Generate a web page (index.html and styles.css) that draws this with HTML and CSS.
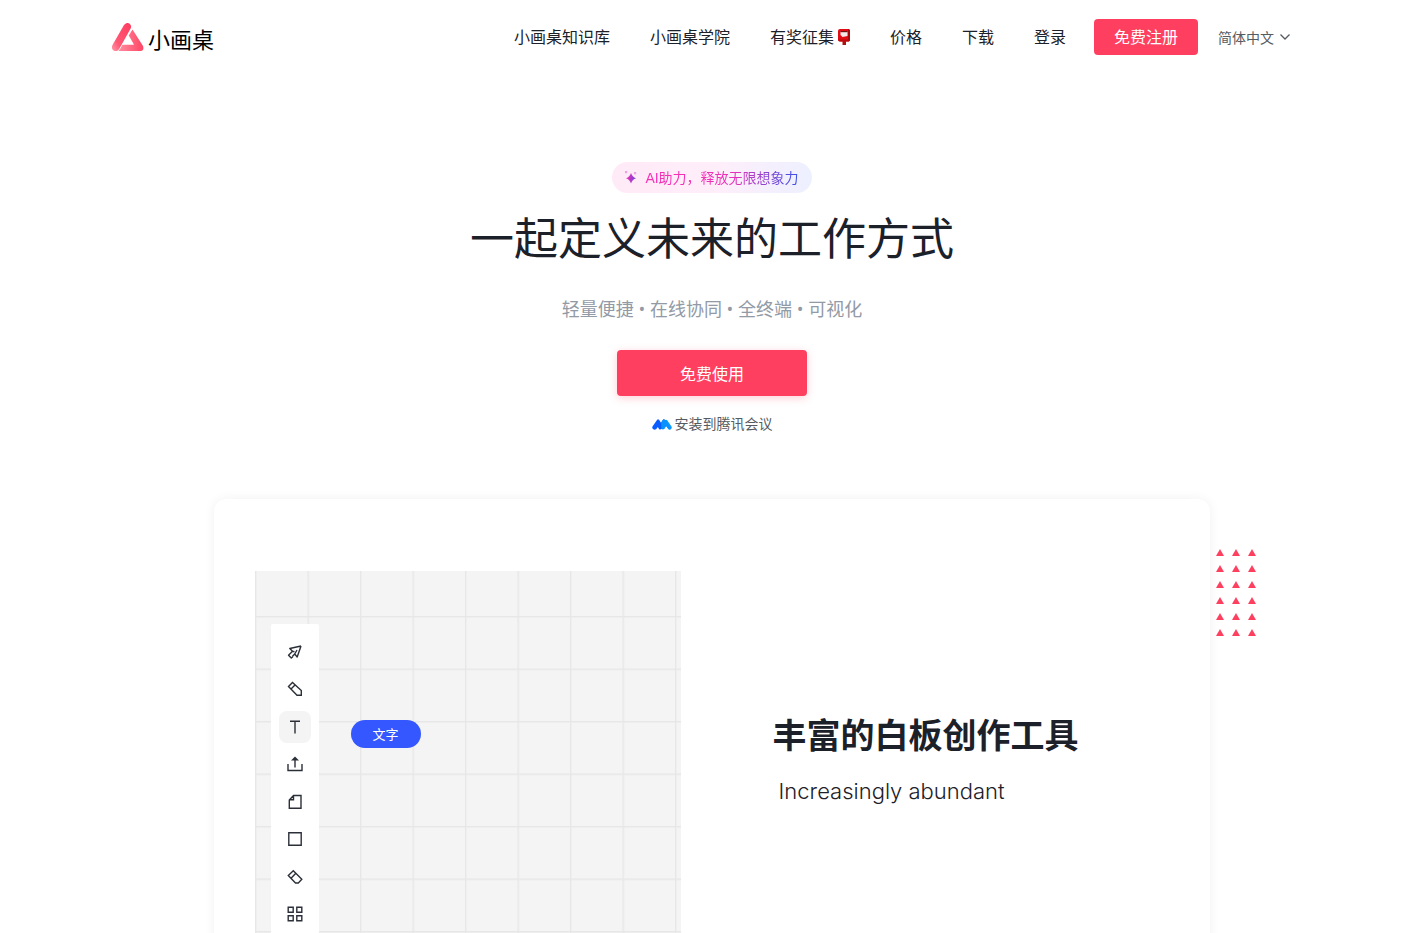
FILE: index.html
```
<!DOCTYPE html>
<html lang="zh-CN">
<head>
    <meta charset="UTF-8">
    <meta name="viewport" content="width=device-width, initial-scale=1.0">
    <title>小画桌</title>
    <link rel="stylesheet" href="styles.css">
</head>
<body>
    <div class="page">
        <!-- Header -->
        <header class="header">
            <a class="logo" href="#">
                <svg width="32" height="28" viewBox="0 0 32 28">
                    <defs>
                        <linearGradient id="logoSide" x1="1" y1="0" x2="0" y2="1">
                            <stop offset="0" stop-color="#ff3b5f" />
                            <stop offset=".7" stop-color="#ff5975" />
                            <stop offset="1" stop-color="#ff9bab" />
                        </linearGradient>
                        <linearGradient id="logoBase" x1="0" y1="0" x2="1" y2="0">
                            <stop offset="0" stop-color="#ff8d9f" />
                            <stop offset="1" stop-color="#ff4565" />
                        </linearGradient>
                    </defs>
                    <path d="M20.500 6.500L31 23q1.500 4.500-2.500 5H6.500l3.800-6.200H22L16.800 12.500z" fill="url(#logoBase)" />
                    <path d="M15.300 3.800L3.800 24.200" fill="none" stroke="white" stroke-width="9" />
                    <path d="M12 2Q15.500-2 18.500 1.800q1.200 2 0 4L7.500 25.500Q5 29.500 1.500 27.500-1.200 25.500.5 22z" fill="url(#logoSide)" />
                </svg>
                <span class="logo-text">小画桌</span>
            </a>
            <nav class="nav">
                <a href="#">小画桌知识库</a>
                <a href="#">小画桌学院</a>
                <a class="nav-post" href="#">有奖征集
                    <svg width="20" height="18" viewBox="0 0 20 18">
                        <path d="M8.500 12h3.500v5H8.500z" fill="#a81416" />
                        <rect x="4" y="1" width="12" height="12.500" rx="2" fill="#e30b13" />
                        <path d="M14 1q2 0 2 2v8.500q0 2-2 2z" fill="#a9080d" />
                        <path d="M4 11.500h12q0 2-2 2H6q-2 0-2-2z" fill="#b80c10" />
                        <path d="M6.500 3.500h7v4.500l-5 1-2-2z" fill="#f7e9e9" />
                        <path d="M6.500 3h7v1.200h-7z" fill="#6b1517" />
                    </svg>
                </a>
                <a href="#">价格</a>
                <a href="#">下载</a>
                <a href="#">登录</a>
            </nav>
            <button class="button button-small" type="button">免费注册</button>
            <button class="language" type="button">
                简体中文
                <svg width="10" height="6" viewBox="0 0 10 6">
                    <path d="M.5.5L5 5 9.500.5" fill="none" stroke="#555b61" stroke-width="1.300" />
                </svg>
            </button>
        </header>

        <!-- Hero -->
        <main class="hero">
            <a class="badge" href="#">
                <svg width="12" height="14" viewBox="0 0 12 14">
                    <defs>
                        <linearGradient id="spark" x1="0" y1="0" x2="1" y2="0">
                            <stop offset="0" stop-color="#f62fb5" />
                            <stop offset="1" stop-color="#6f45dd" />
                        </linearGradient>
                    </defs>
                    <path d="M6 3q1.200 4 5 5.200-3.800 1.200-5 5.300-1.200-4.100-5-5.300Q4.800 7 6 3z" fill="url(#spark)" />
                    <path d="M0 1h2.200v2.200H0zM9 2h2.200v2.200H9z" fill="#eda0df" />
                </svg>
                <span>AI助力，释放无限想象力</span>
            </a>
            <h1>一起定义未来的工作方式</h1>
            <p class="subtitle">轻量便捷 • 在线协同 • 全终端 • 可视化</p>
            <button class="button button-large" type="button">免费使用</button>
            <a class="install" href="#">
                <svg width="20" height="12" viewBox="0 0 20 12">
                    <path d="M10 7l3.200-4.700q1-1.300 2 0l4.300 6.200q.8 1.500-.5 2.700-1.500 1-2.800-.3L14.200 8l-1.800 2.700q-1.500 1.400-3 .1z" fill="#0a9bff" />
                    <path d="M.5 8.500L5 2q1-1.300 2.200 0L9 4.700 10.800 2q1-1.300 2.200 0l1.500 2-4.800 6.800q-1.500 1.300-2.700.2L5.800 9l-1.500 2q-1.500 1.200-3 .2Q-.3 10 .5 8.500z" fill="#0a5cff" />
                    <path d="M9 4.700L10.800 2q1-1.300 2.200 0l6 8.500-2 1-3-3.500-2 3-2.500-.5z" fill="#0a92ff" />
                </svg>
                安装到腾讯会议
            </a>
        </main>

        <!-- Feature card -->
        <section class="card">
            <svg class="triangles" width="40" height="88" viewBox="0 0 40 88">
                <defs>
                    <pattern id="triangle" width="16" height="16" patternUnits="userSpaceOnUse">
                        <path d="M4 0l4 7H0z" fill="#ff3f5f" />
                    </pattern>
                </defs>
                <rect width="40" height="88" fill="url(#triangle)" />
            </svg>
            <div class="board">
                <svg class="board-grid" width="100%" height="100%">
                    <defs>
                        <pattern id="grid" x="0" y="45" width="52.500" height="52.500" patternUnits="userSpaceOnUse">
                            <path d="M0 .7h52.500M.7 0v52.500" fill="none" stroke="#e7e7e8" stroke-width="1.400" />
                        </pattern>
                    </defs>
                    <rect width="100%" height="100%" fill="url(#grid)" />
                </svg>
                <div class="toolbar">
                    <button class="tool" type="button" aria-label="选择">
                        <svg viewBox="0 0 16 16"><path d="M14 2L2.800 4.500l2.700 2.800-4 4 2.800 2.800 1.700-1.600M14 2l-3.800 11-2.500-3-2.200 2.200M5.500 7.300l2 .3M7.700 10L10 6" stroke-linejoin="round" /></svg>
                    </button>
                    <button class="tool" type="button" aria-label="画笔">
                        <svg viewBox="0 0 16 16"><path d="M1.500 5.500l4-4 8.800 8v4.700h-4.300zM4 8l4-4" /></svg>
                    </button>
                    <button class="tool tool-active" type="button" aria-label="文字">
                        <svg viewBox="0 0 16 16"><path d="M3 2.200h10M8 2.200v12.300" /></svg>
                    </button>
                    <button class="tool" type="button" aria-label="上传">
                        <svg viewBox="0 0 16 16"><path d="M1 8v6.500h14V8M8 11.500V3" /><path class="solid" d="M8 .5l4 4H4z" /></svg>
                    </button>
                    <button class="tool" type="button" aria-label="便签">
                        <svg viewBox="0 0 16 16"><path d="M6.500 1.500H14v12.800H2.300V6zM6.500 1.500v4.300H2.300" /></svg>
                    </button>
                    <button class="tool" type="button" aria-label="形状">
                        <svg viewBox="0 0 16 16"><path d="M1.800 1.800h12.400v12.400H1.800z" /></svg>
                    </button>
                    <button class="tool" type="button" aria-label="橡皮擦">
                        <svg viewBox="0 0 16 16"><path d="M1.300 6.500l5-4.800 8.500 8.600-3.500 3.700H8.500zM4.300 9l4.500-4.700" /></svg>
                    </button>
                    <button class="tool" type="button" aria-label="更多">
                        <svg viewBox="0 0 16 16"><path d="M1.200 1.200h5v5h-5zM9.800 1.200h5v5h-5zM1.200 9.800h5v5h-5zM9.800 9.800h5v5h-5z" /></svg>
                    </button>
                </div>
                <span class="text-node">文字</span>
            </div>
            <div class="card-text">
                <h2>丰富的白板创作工具</h2>
                <p>Increasingly abundant</p>
            </div>
        </section>
    </div>
</body>
</html>
```
FILE: styles.css
```
/* Global styles */
:root {
    --primary-color: #ff3f5f;
    --dark-color: #1c2129;
    --text-color: #555b61;
    --gray-color: #929aa5;
    --board-color: #f4f4f4;
}

* {
    box-sizing: border-box;
}

body {
    margin: 0;
    background-color: white;
    color: var(--dark-color);
    font-family: 'Open Sans', 'Noto Sans CJK SC', sans-serif;
    font-size: 16px;
}

a {
    color: inherit;
    text-decoration: none;
}

h1,
h2,
p {
    margin: 0;
}

button {
    padding: 0;
    border: none;
    background: none;
    font-family: inherit;
    cursor: pointer;
}

.page {
    height: 100vh;
    overflow: hidden;
}

/* Header styling */
.header {
    display: flex;
    align-items: center;
    max-width: 1200px;
    height: 74px;
    margin: 0 auto;
    padding-right: 22px;
}

.logo {
    display: flex;
    align-items: center;
    gap: 4px;
}

.logo-text {
    padding-top: 4px;
    color: black;
    font-size: 22px;
    line-height: 28px;
}

.nav {
    display: flex;
    gap: 40px;
    margin-left: auto;
    margin-right: 28px;
    line-height: 24px;
}

.nav-post {
    display: flex;
    align-items: center;
}

.nav-post svg {
    margin-right: -4px;
}

/* Buttons */
.button {
    border-radius: 4px;
    background-color: var(--primary-color);
    color: white;
    font-size: 16px;
}

.button-small {
    height: 36px;
    padding: 0 20px 2px;
}

.button-large {
    width: 190px;
    height: 46px;
    margin-top: 27px;
    box-shadow: 0 2px 8px rgba(255, 63, 95, 0.25);
}

.language {
    display: flex;
    align-items: center;
    gap: 6px;
    margin-left: 20px;
    color: var(--text-color);
    font-size: 14px;
}

/* Hero styling */
.hero {
    display: flex;
    flex-direction: column;
    align-items: center;
    padding-top: 88px;
    text-align: center;
}

.badge {
    display: flex;
    align-items: center;
    gap: 8px;
    height: 31px;
    padding: 0 13px 2px;
    border-radius: 16px;
    background: linear-gradient(90deg, #ffeaf7 0%, #ffeefa 50%, #edf0ff 100%);
    font-family: 'Liberation Sans', 'Noto Sans CJK SC', sans-serif;
    font-size: 14px;
}

.badge span {
    background: linear-gradient(90deg, #f62fb5 0%, #ee2fb8 55%, #3654e8 100%);
    background-clip: text;
    -webkit-background-clip: text;
    color: transparent;
}

.hero h1 {
    margin-top: 12px;
    font-size: 44px;
    font-weight: 400;
    line-height: 66px;
}

.subtitle {
    margin-top: 25px;
    color: var(--gray-color);
    font-size: 18px;
    line-height: 27px;
}

.install {
    display: flex;
    align-items: center;
    gap: 3px;
    margin-top: 17px;
    color: var(--text-color);
    font-size: 14px;
    line-height: 21px;
}

/* Feature card */
.card {
    position: relative;
    display: flex;
    gap: 92px;
    width: 70%;
    min-width: 900px;
    margin: 65px auto 0;
    padding: 72px 40px 72px 41px;
    border-radius: 12px;
    box-shadow: 0 0 12px rgba(0, 0, 0, 0.06);
}

.triangles {
    position: absolute;
    top: 50px;
    left: calc(100% + 6px);
}

.board {
    position: relative;
    flex: 0 0 426px;
    padding: 53px 16px 24px;
    background-color: var(--board-color);
}

.board-grid {
    position: absolute;
    top: 0;
    left: 0;
}

.toolbar {
    position: relative;
    display: flex;
    flex-direction: column;
    align-items: center;
    justify-content: space-between;
    width: 48px;
    height: 318px;
    padding: 12px 0;
    border-radius: 2px;
    background-color: white;
}

.tool {
    display: flex;
    align-items: center;
    justify-content: center;
    width: 32px;
    height: 32px;
    border-radius: 8px;
}

.tool-active {
    background-color: var(--board-color);
}

.tool svg {
    width: 16px;
    height: 16px;
    fill: none;
    stroke: #2b2f38;
    stroke-width: 1.4;
}

.tool .solid {
    fill: #2b2f38;
    stroke: none;
}

/* Text shape placed on the board */
.text-node {
    position: absolute;
    top: 149px;
    left: 96px;
    padding: 0 22px;
    border-radius: 14px;
    background-color: #3457ff;
    color: white;
    font-size: 13px;
    line-height: 28px;
}

.card-text {
    padding-top: 139px;
}

.card-text h2 {
    font-size: 34px;
    font-weight: 700;
    line-height: 50px;
}

.card-text p {
    margin-top: 15px;
    padding-left: 6px;
    font-family: Inter, 'Liberation Sans', sans-serif;
    font-size: 22px;
    font-weight: 300;
    line-height: 32px;
}
```
